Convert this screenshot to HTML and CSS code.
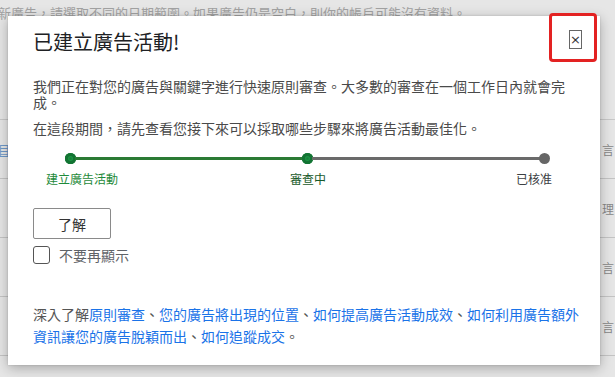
FILE: index.html
```html
<!DOCTYPE html>
<html lang="zh-Hant">
<head>
<meta charset="utf-8">
<link rel="stylesheet" href="styles.css">
</head>
<body>
<div class="page">
  <div class="notice">新廣告，請選取不同的日期範圍。如果廣告仍是空白，則你的帳戶可能沒有資料。</div>
  <div class="rows">
    <div class="row"><span class="l link">目</span><span class="r">言</span></div>
    <div class="row"><span class="l"></span><span class="r">理</span></div>
    <div class="row"><span class="l"></span><span class="r">言</span></div>
    <div class="row"><span class="l"></span><span class="r">言</span></div>
  </div>
</div>

<div class="dialog">
  <div class="header">
    <h1 class="title">已建立廣告活動!</h1>
    <div class="close"><span class="x">×</span></div>
  </div>
  <p class="text">我們正在對您的廣告與關鍵字進行快速原則審查。大多數的審查在一個工作日內就會完成。</p>
  <p class="text second">在這段期間，請先查看您接下來可以採取哪些步驟來將廣告活動最佳化。</p>

  <div class="track">
    <span class="dot done"></span>
    <span class="line done"></span>
    <span class="dot done"></span>
    <span class="line"></span>
    <span class="dot"></span>
  </div>
  <div class="labels">
    <span class="lab first">建立廣告活動</span>
    <span class="lab mid">審查中</span>
    <span class="lab last">已核准</span>
  </div>

  <button class="btn">了解</button>
  <label class="check"><span class="box"></span><span class="check-text">不要再顯示</span></label>

  <p class="footer">深入了解<a class="lk">原則審查</a>、<a class="lk">您的廣告將出現的位置</a>、<a class="lk">如何提高廣告活動成效</a>、<a class="lk">如何利用廣告額外資訊讓您的廣告脫穎而出</a>、<a class="lk">如何追蹤成交</a>。</p>

  <div class="mark"></div>
</div>
</body>
</html>
```
FILE: styles.css
```css
html, body {
  margin: 0;
  padding: 0;
  width: 615px;
  height: 377px;
  overflow: hidden;
}
body {
  background: #e4e4e4;
  font-family: "Noto Sans CJK TC", "Noto Sans", "Liberation Sans", sans-serif;
  position: relative;
}
.page {
  width: 615px;
  height: 377px;
  background: #e6e6e6;
}
.notice {
  font-size: 13px;
  line-height: 16px;
  color: #a2a2a2;
  padding-top: 5px;
  white-space: nowrap;
  margin-left: -2px;
}
.rows {
  margin-top: 98px;
  border-top: 1px solid #c8c8c8;
}
.row {
  height: 58px;
  border-bottom: 1px solid #c4c4c4;
  display: flex;
  justify-content: space-between;
  align-items: center;
  font-size: 12px;
  color: #888;
}
.row .l { margin-left: -2px; }
.row .link { color: #6d98c8; text-decoration: underline; }
.row .r { margin-right: 1px; }

.dialog {
  position: absolute;
  left: 8px;
  top: 16px;
  width: 567px;
  padding: 14px 0 18px 25px;
  background: #fff;
  box-shadow: 0 3px 12px rgba(0, 0, 0, 0.28), 0 0 2px rgba(0, 0, 0, 0.15);
}
.header {
  display: flex;
  justify-content: space-between;
  align-items: flex-start;
  height: 24px;
}
.title {
  margin: 0;
  font-size: 20px;
  line-height: 24px;
  font-weight: 400;
  color: #202124;
}
.close {
  width: 11px;
  height: 17px;
  border: 1px solid #666;
  display: flex;
  align-items: center;
  justify-content: center;
  margin-right: 18px;
  margin-top: 0;
}
.x {
  font-family: "DejaVu Sans", sans-serif;
  font-size: 13px;
  line-height: 13px;
  color: #333;
}
.text {
  margin: 24px 0 0;
  width: 552px;
  font-size: 14px;
  line-height: 16px;
  color: #4a4a4a;
}
.text.second { margin-top: 10px; }

.track {
  display: flex;
  align-items: center;
  margin: 17px 50px 0 32px;
  height: 10px;
}
.dot {
  width: 11px;
  height: 11px;
  border-radius: 50%;
  background: #666;
  flex: none;
}
.dot.done { background: #137333; box-shadow: inset 0 0 0 3px #137333, inset 0 0 2px 4px #1f9c48; }
.line {
  flex: 1;
  height: 3px;
  background: #6a6a6a;
  margin: 0 -1px;
}
.line.done { background: #2a7a34; }

.labels {
  display: grid;
  grid-template-columns: 1fr auto 1fr;
  margin: 8px 30px 0 13px;
  font-size: 12px;
  line-height: 16px;
}
.lab.first { justify-self: start; color: #1e8a3a; }
.lab.mid { color: #17592a; }
.lab.last { justify-self: end; color: #3c4043; margin-right: 18px; }

.btn {
  display: block;
  margin-top: 21px;
  width: 78px;
  height: 31px;
  background: #fff;
  border: 1px solid #8a8a8a;
  border-radius: 2px;
  font-family: inherit;
  font-size: 14px;
  color: #333;
  padding: 0;
}
.check {
  display: flex;
  align-items: center;
  margin-top: 6px;
  height: 19px;
}
.box {
  border: 1.5px solid #555;
  border-radius: 3px;
  box-sizing: content-box;
  width: 15px;
  height: 16px;
}
.check-text {
  margin-left: 9px;
  font-size: 14px;
  color: #5f6368;
}
.footer {
  margin: 39px 0 0;
  width: 552px;
  font-size: 14px;
  line-height: 22px;
  color: #555;
}
.lk { color: #1a73e8; }

.mark {
  position: absolute;
  left: 541px;
  top: -3px;
  width: 42px;
  height: 43px;
  border: 3px solid #e32222;
  border-radius: 4px;
}
```
